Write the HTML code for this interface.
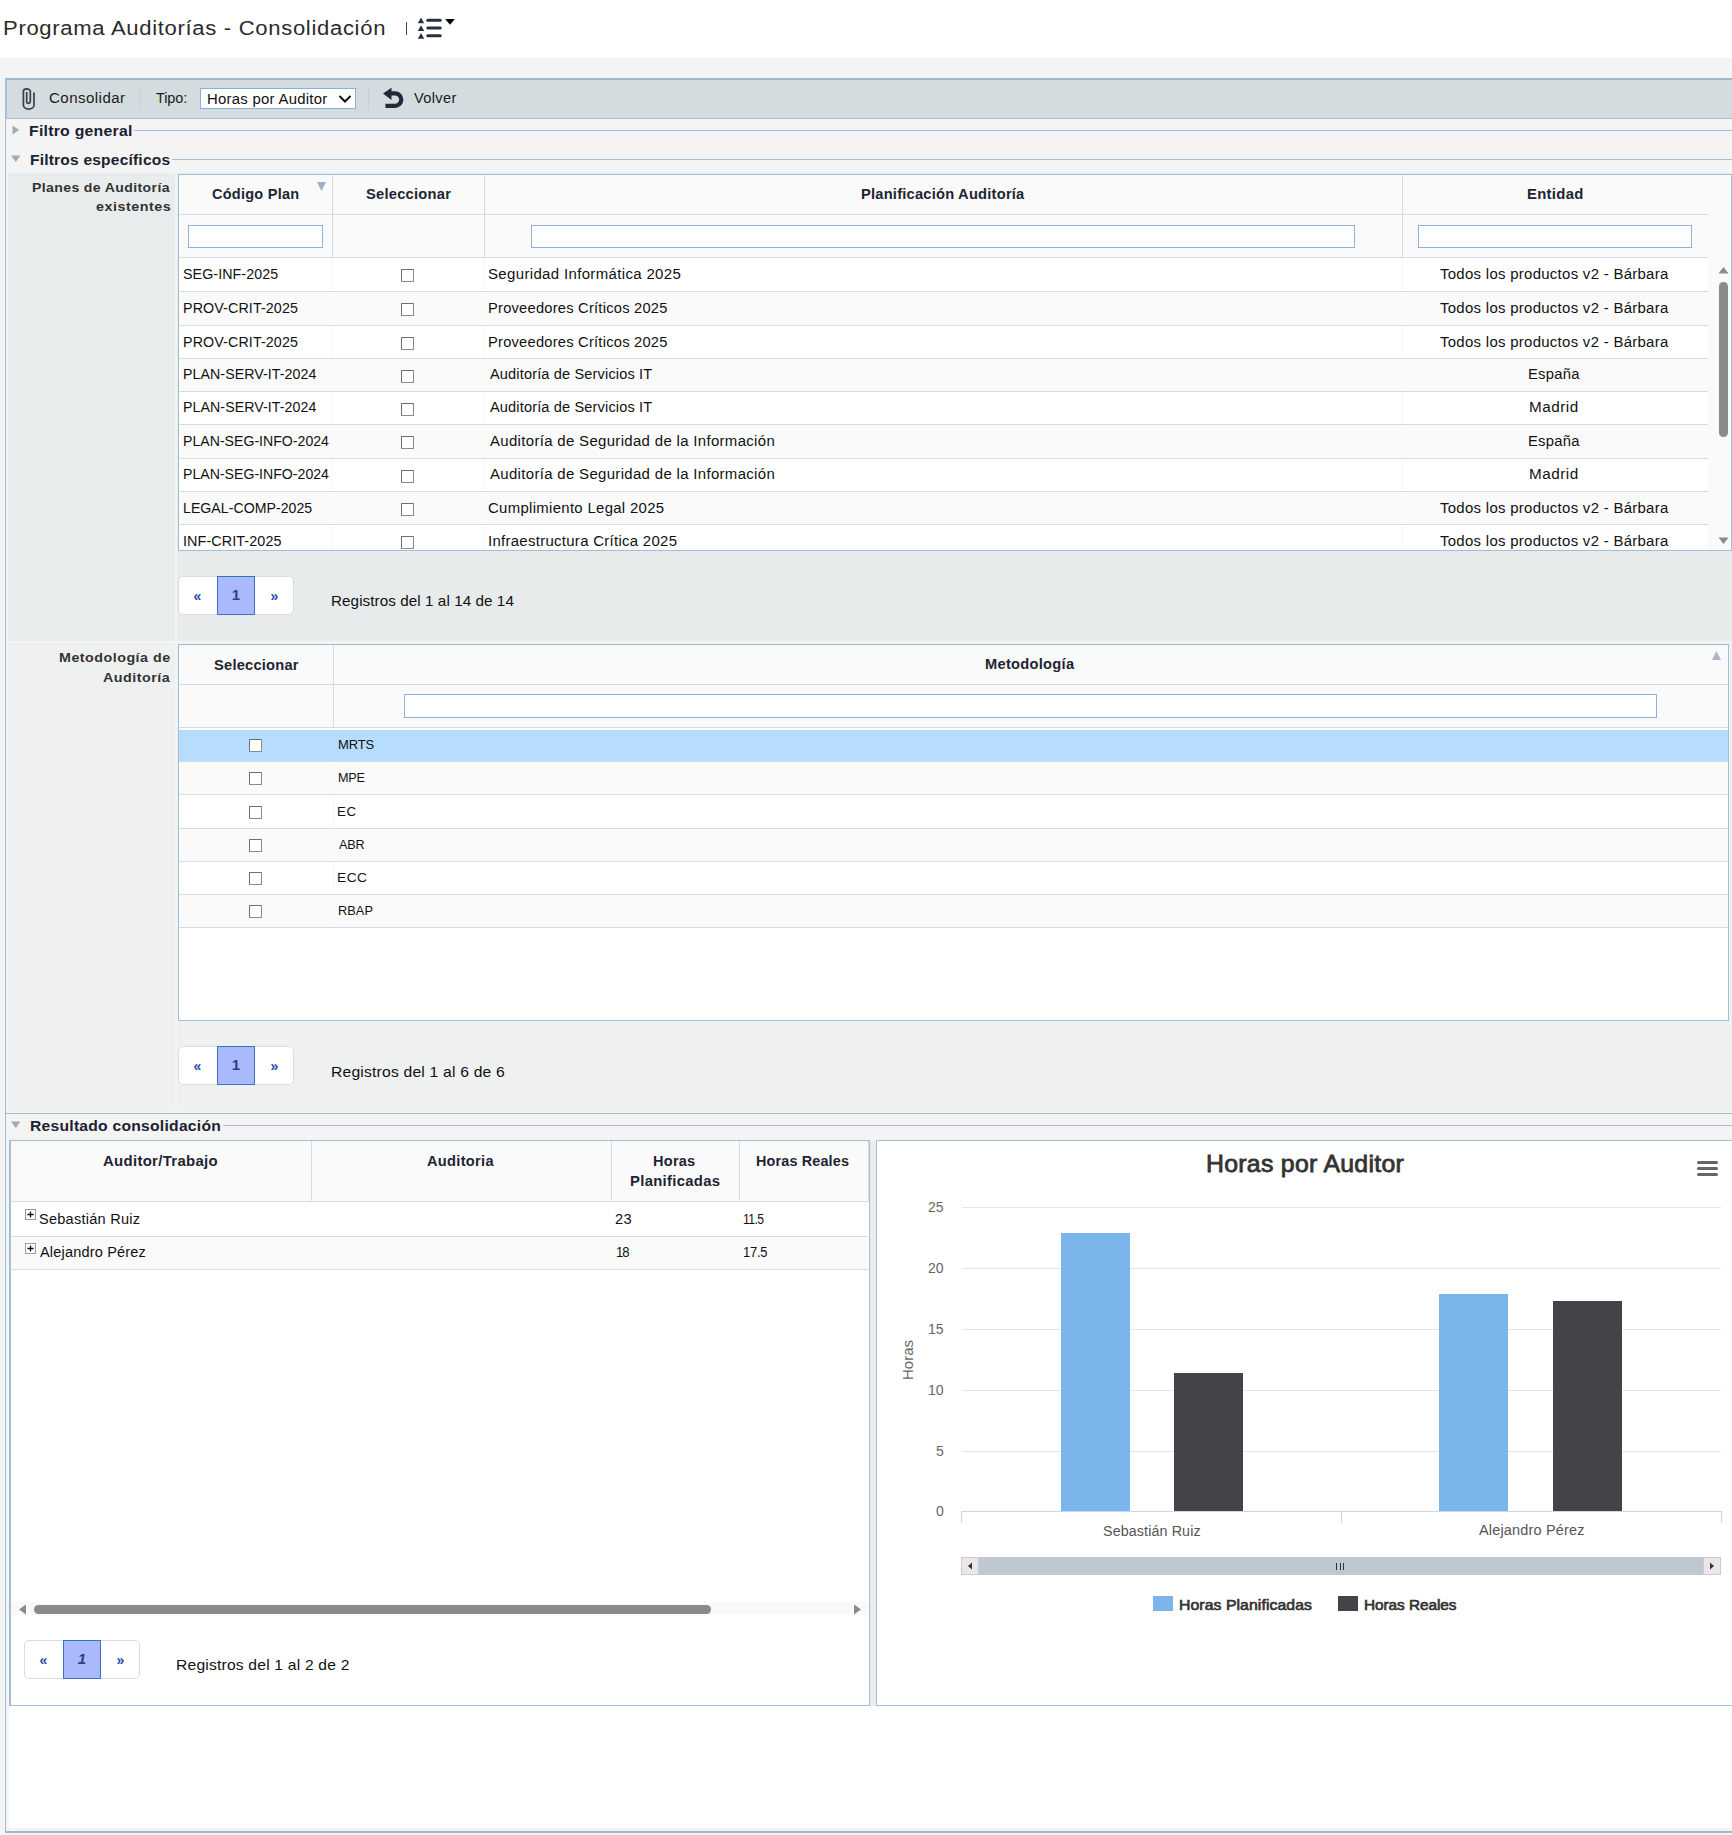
<!DOCTYPE html><html><head><meta charset="utf-8"><style>html,body{margin:0;padding:0}body{width:1732px;height:1835px;overflow:hidden;position:relative;background:#fff;font-family:"Liberation Sans",sans-serif}.t{position:absolute;white-space:nowrap;line-height:1;transform-origin:0 0}</style></head><body>
<div style="position:absolute;left:0px;top:0px;width:1732px;height:58px;background:#fff"></div>
<div style="position:absolute;left:0px;top:58px;width:1732px;height:1777px;background:#f4f4f4"></div>
<div style="position:absolute;left:406px;top:22px;width:1px;height:13px;background:#444"></div>
<svg style="position:absolute;left:417px;top:16px" width="40" height="24" viewBox="0 0 40 24"><path d="M4 1.5 L7.2 7.2 L0.8 7.2Z M4 9.3 L7.2 15 L0.8 15Z M4 17 L7.2 22.7 L0.8 22.7Z" fill="#273142"/><rect x="9.3" y="2.8" width="15.4" height="3" rx="1.5" fill="#273142"/><rect x="9.3" y="10.5" width="15.4" height="3" rx="1.5" fill="#273142"/><rect x="9.3" y="18.2" width="15.4" height="3" rx="1.5" fill="#273142"/><path d="M28.2 3 L37.8 3 L33 8.8Z" fill="#000"/></svg>
<div style="position:absolute;left:5px;top:78px;width:1px;height:1755px;background:#a3bdd5"></div>
<div style="position:absolute;left:5px;top:1831px;width:1727px;height:2px;background:#9fb8cf"></div>
<div style="position:absolute;left:5px;top:78px;width:1727px;height:2px;background:#9fb8cf"></div>
<div style="position:absolute;left:6px;top:80px;width:1726px;height:38px;background:#d5dcdf"></div>
<div style="position:absolute;left:6px;top:80px;width:1px;height:38px;background:#a9c1d6"></div>
<div style="position:absolute;left:6px;top:118px;width:1726px;height:1px;background:#a9c1d6"></div>
<div style="position:absolute;left:140px;top:88px;width:1px;height:22px;background:#c3d2dd"></div>
<div style="position:absolute;left:368px;top:88px;width:1px;height:22px;background:#c3d2dd"></div>
<svg style="position:absolute;left:21px;top:86px" width="16" height="26" viewBox="0 0 16 26"><path d="M5.7 6.5 V15.6 A1.8 1.8 0 0 0 9.3 15.6 V5.4 A3.45 2.6 0 0 0 2.4 5.4 V19.1 A5.3 4 0 0 0 13 19.1 V7" fill="none" stroke="#364150" stroke-width="1.7" stroke-linecap="round"/></svg>
<div style="position:absolute;left:200px;top:88px;width:156px;height:21px;background:#fff;box-sizing:border-box;border:1px solid #8db0d8"></div>
<svg style="position:absolute;left:338px;top:94px" width="14" height="10" viewBox="0 0 14 10"><path d="M1.5 2 L7 7.5 L12.5 2" fill="none" stroke="#111" stroke-width="2"/></svg>
<svg style="position:absolute;left:380px;top:84px" width="28" height="28" viewBox="0 0 28 28"><path d="M10.5 9.3 H15 A6.3 6.3 0 0 1 15 21.9 H5.4" fill="none" stroke="#1f2a3a" stroke-width="4.2"/><path d="M3 9.4 L11.5 3.8 L11.5 15.9Z" fill="#1f2a3a"/></svg>
<svg style="position:absolute;left:12px;top:125px" width="8" height="10"><path d="M0.5 0.5 L7 5 L0.5 9.5Z" fill="#a9a9a9"/></svg>
<div style="position:absolute;left:134px;top:130px;width:1598px;height:1px;background:#a9c1d6"></div>
<svg style="position:absolute;left:11px;top:155px" width="10" height="8"><path d="M0 0.5 L9.5 0.5 L4.75 7Z" fill="#a9a9a9"/></svg>
<div style="position:absolute;left:172px;top:159px;width:1560px;height:1px;background:#a9c1d6"></div>
<div style="position:absolute;left:8px;top:173px;width:167px;height:468px;background:#e9eced"></div>
<div style="position:absolute;left:177px;top:173px;width:1555px;height:468px;background:#e8ebec"></div>
<div style="position:absolute;left:178px;top:174px;width:1554px;height:377px;background:#fafafa;box-sizing:border-box;border:1px solid #a3bdd5"></div>
<div style="position:absolute;left:179px;top:175px;width:1529px;height:83px;background:#fafafa"></div>
<div style="position:absolute;left:179px;top:214px;width:1529px;height:1px;background:#d4dde0"></div>
<div style="position:absolute;left:179px;top:257px;width:1529px;height:1px;background:#d4dde0"></div>
<div style="position:absolute;left:332px;top:175px;width:1px;height:83px;background:#d4dde0"></div>
<div style="position:absolute;left:484px;top:175px;width:1px;height:83px;background:#d4dde0"></div>
<div style="position:absolute;left:1402px;top:175px;width:1px;height:83px;background:#d4dde0"></div>
<div style="position:absolute;left:188px;top:225px;width:135px;height:23px;background:#fff;box-sizing:border-box;border:1px solid #8fb1d9"></div>
<div style="position:absolute;left:531px;top:225px;width:824px;height:23px;background:#fff;box-sizing:border-box;border:1px solid #8fb1d9"></div>
<div style="position:absolute;left:1418px;top:225px;width:274px;height:23px;background:#fff;box-sizing:border-box;border:1px solid #8fb1d9"></div>
<svg style="position:absolute;left:316px;top:181px" width="11" height="11"><path d="M1 1 L10 1 L5.5 10Z" fill="#9fb0c4"/></svg>
<div style="position:absolute;left:179px;top:258px;width:1529px;height:33px;background:#ffffff"></div>
<div style="position:absolute;left:401px;top:269px;width:13px;height:13px;background:#fff;box-sizing:border-box;border:1px solid #8a8a8a;border-top-color:#6f6f6f;border-left-color:#6f6f6f;border-radius:1px"></div>
<div style="position:absolute;left:179px;top:291px;width:1529px;height:34px;background:#fafafa"></div>
<div style="position:absolute;left:401px;top:303px;width:13px;height:13px;background:#fff;box-sizing:border-box;border:1px solid #8a8a8a;border-top-color:#6f6f6f;border-left-color:#6f6f6f;border-radius:1px"></div>
<div style="position:absolute;left:179px;top:325px;width:1529px;height:33px;background:#ffffff"></div>
<div style="position:absolute;left:401px;top:337px;width:13px;height:13px;background:#fff;box-sizing:border-box;border:1px solid #8a8a8a;border-top-color:#6f6f6f;border-left-color:#6f6f6f;border-radius:1px"></div>
<div style="position:absolute;left:179px;top:358px;width:1529px;height:33px;background:#fafafa"></div>
<div style="position:absolute;left:401px;top:370px;width:13px;height:13px;background:#fff;box-sizing:border-box;border:1px solid #8a8a8a;border-top-color:#6f6f6f;border-left-color:#6f6f6f;border-radius:1px"></div>
<div style="position:absolute;left:179px;top:391px;width:1529px;height:33px;background:#ffffff"></div>
<div style="position:absolute;left:401px;top:403px;width:13px;height:13px;background:#fff;box-sizing:border-box;border:1px solid #8a8a8a;border-top-color:#6f6f6f;border-left-color:#6f6f6f;border-radius:1px"></div>
<div style="position:absolute;left:179px;top:424px;width:1529px;height:34px;background:#fafafa"></div>
<div style="position:absolute;left:401px;top:436px;width:13px;height:13px;background:#fff;box-sizing:border-box;border:1px solid #8a8a8a;border-top-color:#6f6f6f;border-left-color:#6f6f6f;border-radius:1px"></div>
<div style="position:absolute;left:179px;top:458px;width:1529px;height:33px;background:#ffffff"></div>
<div style="position:absolute;left:401px;top:470px;width:13px;height:13px;background:#fff;box-sizing:border-box;border:1px solid #8a8a8a;border-top-color:#6f6f6f;border-left-color:#6f6f6f;border-radius:1px"></div>
<div style="position:absolute;left:179px;top:491px;width:1529px;height:33px;background:#fafafa"></div>
<div style="position:absolute;left:401px;top:503px;width:13px;height:13px;background:#fff;box-sizing:border-box;border:1px solid #8a8a8a;border-top-color:#6f6f6f;border-left-color:#6f6f6f;border-radius:1px"></div>
<div style="position:absolute;left:179px;top:524px;width:1529px;height:26px;background:#ffffff"></div>
<div style="position:absolute;left:401px;top:536px;width:13px;height:13px;background:#fff;box-sizing:border-box;border:1px solid #8a8a8a;border-top-color:#6f6f6f;border-left-color:#6f6f6f;border-radius:1px"></div>
<div style="position:absolute;left:332px;top:258px;width:1px;height:292px;background:#f8f8f8"></div>
<div style="position:absolute;left:484px;top:258px;width:1px;height:292px;background:#f8f8f8"></div>
<div style="position:absolute;left:1402px;top:258px;width:1px;height:292px;background:#f8f8f8"></div>
<div style="position:absolute;left:179px;top:291px;width:1529px;height:1px;background:#d4dde0"></div>
<div style="position:absolute;left:179px;top:325px;width:1529px;height:1px;background:#d4dde0"></div>
<div style="position:absolute;left:179px;top:358px;width:1529px;height:1px;background:#d4dde0"></div>
<div style="position:absolute;left:179px;top:391px;width:1529px;height:1px;background:#d4dde0"></div>
<div style="position:absolute;left:179px;top:424px;width:1529px;height:1px;background:#d4dde0"></div>
<div style="position:absolute;left:179px;top:458px;width:1529px;height:1px;background:#d4dde0"></div>
<div style="position:absolute;left:179px;top:491px;width:1529px;height:1px;background:#d4dde0"></div>
<div style="position:absolute;left:179px;top:524px;width:1529px;height:1px;background:#d4dde0"></div>
<div style="position:absolute;left:1708px;top:258px;width:22px;height:292px;background:#fafafa"></div>
<div style="position:absolute;left:1719px;top:282px;width:9px;height:155px;background:#8a8a8a;border-radius:5px"></div>
<svg style="position:absolute;left:1718px;top:266px" width="11" height="8"><path d="M0.5 7.5 L5.5 1 L10.5 7.5Z" fill="#8a8a8a"/></svg>
<svg style="position:absolute;left:1718px;top:537px" width="11" height="8"><path d="M0.5 0.5 L10.5 0.5 L5.5 7Z" fill="#8a8a8a"/></svg>
<div style="position:absolute;left:178px;top:576px;width:116px;height:39px;background:#fff;box-sizing:border-box;border:1px solid #dcdcdc;border-radius:5px"></div>
<div style="position:absolute;left:217px;top:576px;width:38px;height:39px;background:#a9b9fc;box-sizing:border-box;border:1px solid #3a72be"></div>
<div style="position:absolute;left:178px;top:576px;width:39px;height:38px;text-align:center;font:bold 14px 'Liberation Sans', sans-serif;line-height:40px;color:#2649a8">&laquo;</div>
<div style="position:absolute;left:217px;top:576px;width:38px;height:39px;text-align:center;font:bold 15px 'Liberation Sans', sans-serif;line-height:38px;color:#2a3f8f">1</div>
<div style="position:absolute;left:255px;top:576px;width:39px;height:38px;text-align:center;font:bold 14px 'Liberation Sans', sans-serif;line-height:40px;color:#2649a8">&raquo;</div>
<div style="position:absolute;left:8px;top:643px;width:167px;height:468px;background:#eff0f0"></div>
<div style="position:absolute;left:177px;top:643px;width:1555px;height:468px;background:#eff0f0"></div>
<div style="position:absolute;left:178px;top:644px;width:1551px;height:377px;background:#fff;box-sizing:border-box;border:1px solid #a3bdd5"></div>
<div style="position:absolute;left:179px;top:645px;width:1549px;height:83px;background:#fafafa"></div>
<div style="position:absolute;left:179px;top:684px;width:1549px;height:1px;background:#d4dde0"></div>
<div style="position:absolute;left:179px;top:727px;width:1549px;height:1px;background:#d4dde0"></div>
<div style="position:absolute;left:333px;top:645px;width:1px;height:83px;background:#d4dde0"></div>
<div style="position:absolute;left:404px;top:694px;width:1253px;height:24px;background:#fff;box-sizing:border-box;border:1px solid #8fb1d9"></div>
<svg style="position:absolute;left:1711px;top:650px" width="11" height="11"><path d="M5.5 1 L10 10 L1 10Z" fill="#a9b6c6"/></svg>
<div style="position:absolute;left:179px;top:730px;width:1549px;height:31px;background:#b6ddfd"></div>
<div style="position:absolute;left:249px;top:739px;width:13px;height:13px;background:#fff;box-sizing:border-box;border:1px solid #8a8a8a;border-top-color:#6f6f6f;border-left-color:#6f6f6f;border-radius:1px"></div>
<div style="position:absolute;left:179px;top:761px;width:1549px;height:33px;background:#fafafa"></div>
<div style="position:absolute;left:249px;top:772px;width:13px;height:13px;background:#fff;box-sizing:border-box;border:1px solid #8a8a8a;border-top-color:#6f6f6f;border-left-color:#6f6f6f;border-radius:1px"></div>
<div style="position:absolute;left:179px;top:794px;width:1549px;height:34px;background:#ffffff"></div>
<div style="position:absolute;left:249px;top:806px;width:13px;height:13px;background:#fff;box-sizing:border-box;border:1px solid #8a8a8a;border-top-color:#6f6f6f;border-left-color:#6f6f6f;border-radius:1px"></div>
<div style="position:absolute;left:179px;top:828px;width:1549px;height:33px;background:#fafafa"></div>
<div style="position:absolute;left:249px;top:839px;width:13px;height:13px;background:#fff;box-sizing:border-box;border:1px solid #8a8a8a;border-top-color:#6f6f6f;border-left-color:#6f6f6f;border-radius:1px"></div>
<div style="position:absolute;left:179px;top:861px;width:1549px;height:33px;background:#ffffff"></div>
<div style="position:absolute;left:249px;top:872px;width:13px;height:13px;background:#fff;box-sizing:border-box;border:1px solid #8a8a8a;border-top-color:#6f6f6f;border-left-color:#6f6f6f;border-radius:1px"></div>
<div style="position:absolute;left:179px;top:894px;width:1549px;height:33px;background:#fafafa"></div>
<div style="position:absolute;left:249px;top:905px;width:13px;height:13px;background:#fff;box-sizing:border-box;border:1px solid #8a8a8a;border-top-color:#6f6f6f;border-left-color:#6f6f6f;border-radius:1px"></div>
<div style="position:absolute;left:333px;top:762px;width:1px;height:166px;background:#f8f8f8"></div>
<div style="position:absolute;left:179px;top:761px;width:1549px;height:1px;background:#d4dde0"></div>
<div style="position:absolute;left:179px;top:794px;width:1549px;height:1px;background:#d4dde0"></div>
<div style="position:absolute;left:179px;top:828px;width:1549px;height:1px;background:#d4dde0"></div>
<div style="position:absolute;left:179px;top:861px;width:1549px;height:1px;background:#d4dde0"></div>
<div style="position:absolute;left:179px;top:894px;width:1549px;height:1px;background:#d4dde0"></div>
<div style="position:absolute;left:179px;top:927px;width:1549px;height:1px;background:#d4dde0"></div>
<div style="position:absolute;left:178px;top:1046px;width:116px;height:39px;background:#fff;box-sizing:border-box;border:1px solid #dcdcdc;border-radius:5px"></div>
<div style="position:absolute;left:217px;top:1046px;width:38px;height:39px;background:#a9b9fc;box-sizing:border-box;border:1px solid #3a72be"></div>
<div style="position:absolute;left:178px;top:1046px;width:39px;height:38px;text-align:center;font:bold 14px 'Liberation Sans', sans-serif;line-height:40px;color:#2649a8">&laquo;</div>
<div style="position:absolute;left:217px;top:1046px;width:38px;height:39px;text-align:center;font:bold 15px 'Liberation Sans', sans-serif;line-height:38px;color:#2a3f8f">1</div>
<div style="position:absolute;left:255px;top:1046px;width:39px;height:38px;text-align:center;font:bold 14px 'Liberation Sans', sans-serif;line-height:40px;color:#2649a8">&raquo;</div>
<div style="position:absolute;left:5px;top:1113px;width:1727px;height:1px;background:#a3bdd5"></div>
<svg style="position:absolute;left:11px;top:1121px" width="10" height="8"><path d="M0 0.5 L9.5 0.5 L4.75 7Z" fill="#a9a9a9"/></svg>
<div style="position:absolute;left:223px;top:1125px;width:1509px;height:1px;background:#a9c1d6"></div>
<div style="position:absolute;left:9px;top:1706px;width:1723px;height:122px;background:#fff"></div>
<div style="position:absolute;left:9px;top:1140px;width:861px;height:566px;background:#fff;box-sizing:border-box;border:1px solid #a3bdd5;border-left-width:2px"></div>
<div style="position:absolute;left:11px;top:1141px;width:857px;height:60px;background:#fafafa"></div>
<div style="position:absolute;left:11px;top:1201px;width:857px;height:1px;background:#d4dde0"></div>
<div style="position:absolute;left:311px;top:1141px;width:1px;height:60px;background:#d4dde0"></div>
<div style="position:absolute;left:611px;top:1141px;width:1px;height:60px;background:#d4dde0"></div>
<div style="position:absolute;left:739px;top:1141px;width:1px;height:60px;background:#d4dde0"></div>
<div style="position:absolute;left:868px;top:1141px;width:1px;height:60px;background:#d4dde0"></div>
<div style="position:absolute;left:11px;top:1202px;width:857px;height:34px;background:#fff"></div>
<div style="position:absolute;left:11px;top:1236px;width:857px;height:1px;background:#d4dde0"></div>
<div style="position:absolute;left:11px;top:1237px;width:857px;height:32px;background:#fafafa"></div>
<div style="position:absolute;left:11px;top:1269px;width:857px;height:1px;background:#d4dde0"></div>
<svg style="position:absolute;left:25px;top:1209px" width="11" height="11"><rect x="0.5" y="0.5" width="10" height="10" fill="#fff" stroke="#9a9a9a"/><path d="M2.4 5.5 H8.6 M5.5 2.4 V8.6" stroke="#111" stroke-width="1.3"/></svg>
<svg style="position:absolute;left:25px;top:1242.5px" width="11" height="11"><rect x="0.5" y="0.5" width="10" height="10" fill="#fff" stroke="#9a9a9a"/><path d="M2.4 5.5 H8.6 M5.5 2.4 V8.6" stroke="#111" stroke-width="1.3"/></svg>
<div style="position:absolute;left:11px;top:1602px;width:857px;height:13px;background:#f9f9f9"></div>
<div style="position:absolute;left:34px;top:1605px;width:677px;height:9px;background:#8a8a8a;border-radius:4.5px"></div>
<svg style="position:absolute;left:18px;top:1604px" width="9" height="11"><path d="M8 0.5 L8 10.5 L1 5.5Z" fill="#8a8a8a"/></svg>
<svg style="position:absolute;left:853px;top:1604px" width="9" height="11"><path d="M1 0.5 L1 10.5 L8 5.5Z" fill="#8a8a8a"/></svg>
<div style="position:absolute;left:24px;top:1640px;width:116px;height:39px;background:#fff;box-sizing:border-box;border:1px solid #dcdcdc;border-radius:5px"></div>
<div style="position:absolute;left:63px;top:1640px;width:38px;height:39px;background:#a9b9fc;box-sizing:border-box;border:1px solid #3a72be"></div>
<div style="position:absolute;left:24px;top:1640px;width:39px;height:38px;text-align:center;font:bold 14px 'Liberation Sans', sans-serif;line-height:40px;color:#2649a8">&laquo;</div>
<div style="position:absolute;left:63px;top:1640px;width:38px;height:39px;text-align:center;font:italic bold 15px 'Liberation Sans', sans-serif;line-height:38px;color:#2a3f8f">1</div>
<div style="position:absolute;left:101px;top:1640px;width:39px;height:38px;text-align:center;font:bold 14px 'Liberation Sans', sans-serif;line-height:40px;color:#2649a8">&raquo;</div>
<div style="position:absolute;left:870px;top:1141px;width:6px;height:565px;background:#ebebeb"></div>
<div style="position:absolute;left:876px;top:1140px;width:856px;height:566px;background:#fff;box-sizing:border-box;border:1px solid #a3bdd5;border-right:none"></div>
<div style="position:absolute;left:1697px;top:1161px;width:21px;height:3.4px;background:#666;border-radius:2px"></div>
<div style="position:absolute;left:1697px;top:1167px;width:21px;height:3.4px;background:#666;border-radius:2px"></div>
<div style="position:absolute;left:1697px;top:1173px;width:21px;height:3.4px;background:#666;border-radius:2px"></div>
<div style="position:absolute;left:962px;top:1451px;width:759px;height:1px;background:#e6e6e6"></div>
<div style="position:absolute;left:962px;top:1390px;width:759px;height:1px;background:#e6e6e6"></div>
<div style="position:absolute;left:962px;top:1329px;width:759px;height:1px;background:#e6e6e6"></div>
<div style="position:absolute;left:962px;top:1268px;width:759px;height:1px;background:#e6e6e6"></div>
<div style="position:absolute;left:962px;top:1207px;width:759px;height:1px;background:#e6e6e6"></div>
<div style="position:absolute;left:961px;top:1511px;width:760px;height:1px;background:#ccd6eb"></div>
<div style="position:absolute;left:961px;top:1511px;width:1px;height:12px;background:#ccd6eb"></div>
<div style="position:absolute;left:1341px;top:1511px;width:1px;height:12px;background:#ccd6eb"></div>
<div style="position:absolute;left:1721px;top:1511px;width:1px;height:12px;background:#ccd6eb"></div>
<div style="position:absolute;left:878px;top:1351px;width:60px;height:18px;line-height:18px;text-align:center;transform:rotate(-90deg);font:15px 'Liberation Sans', sans-serif;line-height:18px;color:#666">Horas</div>
<div style="position:absolute;left:1061px;top:1233px;width:69px;height:278px;background:#7cb5ec"></div>
<div style="position:absolute;left:1174px;top:1373px;width:69px;height:138px;background:#434348"></div>
<div style="position:absolute;left:1439px;top:1294px;width:69px;height:217px;background:#7cb5ec"></div>
<div style="position:absolute;left:1553px;top:1301px;width:69px;height:210px;background:#434348"></div>
<div style="position:absolute;left:961px;top:1557px;width:760px;height:18px;background:#bfc8d1"></div>
<div style="position:absolute;left:961px;top:1557px;width:18px;height:18px;background:#ebe7e8;box-sizing:border-box;border:1px solid #ccc"></div>
<div style="position:absolute;left:1703px;top:1557px;width:18px;height:18px;background:#ebe7e8;box-sizing:border-box;border:1px solid #ccc"></div>
<svg style="position:absolute;left:966px;top:1561px" width="8" height="10"><path d="M6 1.5 L6 8.5 L2 5Z" fill="#333"/></svg>
<svg style="position:absolute;left:1708px;top:1561px" width="8" height="10"><path d="M2 1.5 L2 8.5 L6 5Z" fill="#333"/></svg>
<div style="position:absolute;left:1336px;top:1563px;width:1px;height:7px;background:#333"></div>
<div style="position:absolute;left:1339.5px;top:1563px;width:1px;height:7px;background:#333"></div>
<div style="position:absolute;left:1343px;top:1563px;width:1px;height:7px;background:#333"></div>
<div style="position:absolute;left:1153px;top:1596px;width:20px;height:15px;background:#7cb5ec"></div>
<div style="position:absolute;left:1338px;top:1596px;width:20px;height:15px;background:#434348"></div>
<div class="t" style="left:3.29px;top:17.60px;font-size:20px;font-weight:400;color:#2b2b2b;letter-spacing:0.620px;transform:scaleX(1.1027);">Programa Auditorías - Consolidación</div>
<div class="t" style="left:48.52px;top:91.20px;font-size:14px;font-weight:400;color:#1a1a1a;letter-spacing:0.426px;transform:scaleX(1.0754);">Consolidar</div>
<div class="t" style="left:156.20px;top:91.10px;font-size:14px;font-weight:400;color:#1a1a1a;letter-spacing:-0.057px;transform:scaleX(1.0307);">Tipo:</div>
<div class="t" style="left:207.14px;top:91.80px;font-size:14px;font-weight:400;color:#111;letter-spacing:0.267px;transform:scaleX(1.0621);">Horas por Auditor</div>
<div class="t" style="left:413.70px;top:91.10px;font-size:14px;font-weight:400;color:#1a1a1a;letter-spacing:0.304px;transform:scaleX(1.0455);">Volver</div>
<div class="t" style="left:28.95px;top:123.25px;font-size:15px;font-weight:700;color:#1b2230;letter-spacing:0.234px;transform:scaleX(1.0545);">Filtro general</div>
<div class="t" style="left:29.96px;top:152.25px;font-size:15px;font-weight:700;color:#1b2230;letter-spacing:0.190px;transform:scaleX(1.0365);">Filtros específicos</div>
<div class="t" style="left:32.37px;top:180.65px;font-size:13px;font-weight:700;color:#333;letter-spacing:0.348px;transform:scaleX(1.0813);">Planes de Auditoría</div>
<div class="t" style="left:95.98px;top:199.95px;font-size:13px;font-weight:700;color:#333;letter-spacing:0.470px;transform:scaleX(1.1002);">existentes</div>
<div class="t" style="left:212.27px;top:187.10px;font-size:14px;font-weight:700;color:#1e2433;letter-spacing:0.254px;transform:scaleX(1.0348);">Código Plan</div>
<div class="t" style="left:365.65px;top:187.10px;font-size:14px;font-weight:700;color:#1e2433;letter-spacing:0.238px;transform:scaleX(1.0483);">Seleccionar</div>
<div class="t" style="left:861.15px;top:187.10px;font-size:14px;font-weight:700;color:#1e2433;letter-spacing:0.220px;transform:scaleX(1.0465);">Planificación Auditoría</div>
<div class="t" style="left:1526.94px;top:187.10px;font-size:14px;font-weight:700;color:#1e2433;letter-spacing:0.304px;transform:scaleX(1.0600);">Entidad</div>
<div class="t" style="left:183.48px;top:266.80px;font-size:14px;font-weight:400;color:#111;letter-spacing:0.089px;transform:scaleX(1.0164);">SEG-INF-2025</div>
<div class="t" style="left:488.43px;top:266.80px;font-size:14px;font-weight:400;color:#111;letter-spacing:0.319px;transform:scaleX(1.0714);">Seguridad Informática 2025</div>
<div class="t" style="left:1439.77px;top:266.80px;font-size:14px;font-weight:400;color:#111;letter-spacing:0.271px;transform:scaleX(1.0676);">Todos los productos v2 - Bárbara</div>
<div class="t" style="left:183.48px;top:300.70px;font-size:14px;font-weight:400;color:#111;letter-spacing:0.107px;transform:scaleX(1.0200);">PROV-CRIT-2025</div>
<div class="t" style="left:488.45px;top:300.70px;font-size:14px;font-weight:400;color:#111;letter-spacing:0.228px;transform:scaleX(1.0475);">Proveedores Críticos 2025</div>
<div class="t" style="left:1439.77px;top:300.70px;font-size:14px;font-weight:400;color:#111;letter-spacing:0.271px;transform:scaleX(1.0676);">Todos los productos v2 - Bárbara</div>
<div class="t" style="left:183.48px;top:334.50px;font-size:14px;font-weight:400;color:#111;letter-spacing:0.107px;transform:scaleX(1.0200);">PROV-CRIT-2025</div>
<div class="t" style="left:488.45px;top:334.50px;font-size:14px;font-weight:400;color:#111;letter-spacing:0.228px;transform:scaleX(1.0475);">Proveedores Críticos 2025</div>
<div class="t" style="left:1439.77px;top:334.50px;font-size:14px;font-weight:400;color:#111;letter-spacing:0.271px;transform:scaleX(1.0676);">Todos los productos v2 - Bárbara</div>
<div class="t" style="left:183.49px;top:367.40px;font-size:14px;font-weight:400;color:#111;letter-spacing:0.076px;transform:scaleX(1.0125);">PLAN-SERV-IT-2024</div>
<div class="t" style="left:489.50px;top:367.40px;font-size:14px;font-weight:400;color:#111;letter-spacing:0.152px;transform:scaleX(1.0386);">Auditoría de Servicios IT</div>
<div class="t" style="left:1528.12px;top:367.40px;font-size:14px;font-weight:400;color:#111;letter-spacing:0.227px;transform:scaleX(1.0563);">España</div>
<div class="t" style="left:183.49px;top:400.40px;font-size:14px;font-weight:400;color:#111;letter-spacing:0.076px;transform:scaleX(1.0125);">PLAN-SERV-IT-2024</div>
<div class="t" style="left:489.50px;top:400.40px;font-size:14px;font-weight:400;color:#111;letter-spacing:0.152px;transform:scaleX(1.0386);">Auditoría de Servicios IT</div>
<div class="t" style="left:1529.45px;top:400.40px;font-size:14px;font-weight:400;color:#111;letter-spacing:0.470px;transform:scaleX(1.0909);">Madrid</div>
<div class="t" style="left:183.49px;top:433.70px;font-size:14px;font-weight:400;color:#111;letter-spacing:0.009px;transform:scaleX(1.0075);">PLAN-SEG-INFO-2024</div>
<div class="t" style="left:489.50px;top:433.70px;font-size:14px;font-weight:400;color:#111;letter-spacing:0.311px;transform:scaleX(1.0679);">Auditoría de Seguridad de la Información</div>
<div class="t" style="left:1528.12px;top:433.70px;font-size:14px;font-weight:400;color:#111;letter-spacing:0.227px;transform:scaleX(1.0563);">España</div>
<div class="t" style="left:183.49px;top:467.40px;font-size:14px;font-weight:400;color:#111;letter-spacing:0.009px;transform:scaleX(1.0075);">PLAN-SEG-INFO-2024</div>
<div class="t" style="left:489.50px;top:467.40px;font-size:14px;font-weight:400;color:#111;letter-spacing:0.311px;transform:scaleX(1.0679);">Auditoría de Seguridad de la Información</div>
<div class="t" style="left:1529.45px;top:467.40px;font-size:14px;font-weight:400;color:#111;letter-spacing:0.470px;transform:scaleX(1.0909);">Madrid</div>
<div class="t" style="left:183.49px;top:500.60px;font-size:14px;font-weight:400;color:#111;letter-spacing:0.048px;transform:scaleX(1.0067);">LEGAL-COMP-2025</div>
<div class="t" style="left:488.43px;top:500.60px;font-size:14px;font-weight:400;color:#111;letter-spacing:0.293px;transform:scaleX(1.0658);">Cumplimiento Legal 2025</div>
<div class="t" style="left:1439.77px;top:500.60px;font-size:14px;font-weight:400;color:#111;letter-spacing:0.271px;transform:scaleX(1.0676);">Todos los productos v2 - Bárbara</div>
<div class="t" style="left:183.47px;top:533.80px;font-size:14px;font-weight:400;color:#111;letter-spacing:0.081px;transform:scaleX(1.0269);">INF-CRIT-2025</div>
<div class="t" style="left:488.43px;top:533.80px;font-size:14px;font-weight:400;color:#111;letter-spacing:0.274px;transform:scaleX(1.0674);">Infraestructura Crítica 2025</div>
<div class="t" style="left:1439.77px;top:533.80px;font-size:14px;font-weight:400;color:#111;letter-spacing:0.271px;transform:scaleX(1.0676);">Todos los productos v2 - Bárbara</div>
<div class="t" style="left:330.68px;top:593.25px;font-size:15px;font-weight:400;color:#111;letter-spacing:0.061px;transform:scaleX(1.0158);">Registros del 1 al 14 de 14</div>
<div class="t" style="left:59.19px;top:650.95px;font-size:13px;font-weight:700;color:#333;letter-spacing:0.459px;transform:scaleX(1.0971);">Metodología de</div>
<div class="t" style="left:102.68px;top:670.95px;font-size:13px;font-weight:700;color:#333;letter-spacing:0.427px;transform:scaleX(1.1036);">Auditoría</div>
<div class="t" style="left:213.55px;top:657.60px;font-size:14px;font-weight:700;color:#1e2433;letter-spacing:0.215px;transform:scaleX(1.0468);">Seleccionar</div>
<div class="t" style="left:985.25px;top:656.90px;font-size:14px;font-weight:700;color:#1e2433;letter-spacing:0.262px;transform:scaleX(1.0468);">Metodología</div>
<div class="t" style="left:337.50px;top:737.75px;font-size:13px;font-weight:400;color:#111;letter-spacing:-0.080px;transform:scaleX(0.9966);">MRTS</div>
<div class="t" style="left:337.53px;top:771.05px;font-size:13px;font-weight:400;color:#111;letter-spacing:-0.230px;transform:scaleX(0.9731);">MPE</div>
<div class="t" style="left:337.48px;top:804.55px;font-size:13px;font-weight:400;color:#111;letter-spacing:0.594px;transform:scaleX(1.0186);">EC</div>
<div class="t" style="left:338.50px;top:837.65px;font-size:13px;font-weight:400;color:#111;letter-spacing:-0.230px;transform:scaleX(0.9720);">ABR</div>
<div class="t" style="left:337.44px;top:870.75px;font-size:13px;font-weight:400;color:#111;letter-spacing:0.457px;transform:scaleX(1.0589);">ECC</div>
<div class="t" style="left:337.51px;top:903.85px;font-size:13px;font-weight:400;color:#111;letter-spacing:0.011px;transform:scaleX(0.9858);">RBAP</div>
<div class="t" style="left:330.65px;top:1063.95px;font-size:15px;font-weight:400;color:#111;letter-spacing:0.185px;transform:scaleX(1.0454);">Registros del 1 al 6 de 6</div>
<div class="t" style="left:30.36px;top:1118.15px;font-size:15px;font-weight:700;color:#1b2230;letter-spacing:0.239px;transform:scaleX(1.0437);">Resultado consolidación</div>
<div class="t" style="left:103.33px;top:1153.80px;font-size:14px;font-weight:700;color:#1e2433;letter-spacing:0.295px;transform:scaleX(1.0651);">Auditor/Trabajo</div>
<div class="t" style="left:427.26px;top:1154.00px;font-size:14px;font-weight:700;color:#1e2433;letter-spacing:0.286px;transform:scaleX(1.0436);">Auditoria</div>
<div class="t" style="left:653.46px;top:1154.10px;font-size:14px;font-weight:700;color:#1e2433;letter-spacing:0.236px;transform:scaleX(1.0390);">Horas</div>
<div class="t" style="left:629.64px;top:1173.80px;font-size:14px;font-weight:700;color:#1e2433;letter-spacing:0.302px;transform:scaleX(1.0589);">Planificadas</div>
<div class="t" style="left:756.47px;top:1154.10px;font-size:14px;font-weight:700;color:#1e2433;letter-spacing:0.158px;transform:scaleX(1.0273);">Horas Reales</div>
<div class="t" style="left:38.96px;top:1212.30px;font-size:14px;font-weight:400;color:#111;letter-spacing:0.236px;transform:scaleX(1.0382);">Sebastián Ruiz</div>
<div class="t" style="left:615.45px;top:1212.30px;font-size:14px;font-weight:400;color:#111;letter-spacing:0.290px;transform:scaleX(1.0464);">23</div>
<div class="t" style="left:742.94px;top:1212.30px;font-size:14px;font-weight:400;color:#111;letter-spacing:-0.652px;transform:scaleX(0.8642);">11.5</div>
<div class="t" style="left:40.00px;top:1244.80px;font-size:14px;font-weight:400;color:#111;letter-spacing:0.173px;transform:scaleX(1.0377);">Alejandro Pérez</div>
<div class="t" style="left:615.57px;top:1244.80px;font-size:14px;font-weight:400;color:#111;letter-spacing:-0.990px;transform:scaleX(0.9298);">18</div>
<div class="t" style="left:742.87px;top:1244.80px;font-size:14px;font-weight:400;color:#111;letter-spacing:-0.287px;transform:scaleX(0.9267);">17.5</div>
<div class="t" style="left:175.66px;top:1657.25px;font-size:15px;font-weight:400;color:#111;letter-spacing:0.188px;transform:scaleX(1.0425);">Registros del 1 al 2 de 2</div>
<div class="t" style="left:1206.33px;top:1152.10px;font-size:24px;font-weight:400;color:#333;letter-spacing:0.282px;transform:scaleX(1.0340);-webkit-text-stroke:0.8px #333;">Horas por Auditor</div>
<div class="t" style="left:936.00px;top:1503.70px;font-size:14px;font-weight:400;color:#666;">0</div>
<div class="t" style="left:936.00px;top:1443.70px;font-size:14px;font-weight:400;color:#666;">5</div>
<div class="t" style="left:928.00px;top:1382.70px;font-size:14px;font-weight:400;color:#666;">10</div>
<div class="t" style="left:928.00px;top:1321.70px;font-size:14px;font-weight:400;color:#666;">15</div>
<div class="t" style="left:928.00px;top:1260.70px;font-size:14px;font-weight:400;color:#666;">20</div>
<div class="t" style="left:928.00px;top:1199.70px;font-size:14px;font-weight:400;color:#666;">25</div>
<div class="t" style="left:1102.98px;top:1523.60px;font-size:14px;font-weight:400;color:#555;letter-spacing:0.120px;transform:scaleX(1.0192);">Sebastián Ruiz</div>
<div class="t" style="left:1478.83px;top:1522.90px;font-size:14px;font-weight:400;color:#555;letter-spacing:0.178px;transform:scaleX(1.0330);">Alejandro Pérez</div>
<div class="t" style="left:1178.98px;top:1597.33px;font-size:15.5px;font-weight:400;color:#333;letter-spacing:0.082px;transform:scaleX(1.0172);-webkit-text-stroke:0.7px #333;">Horas Planificadas</div>
<div class="t" style="left:1363.81px;top:1597.33px;font-size:15.5px;font-weight:400;color:#333;letter-spacing:-0.052px;transform:scaleX(0.9916);-webkit-text-stroke:0.7px #333;">Horas Reales</div>
</body></html>
